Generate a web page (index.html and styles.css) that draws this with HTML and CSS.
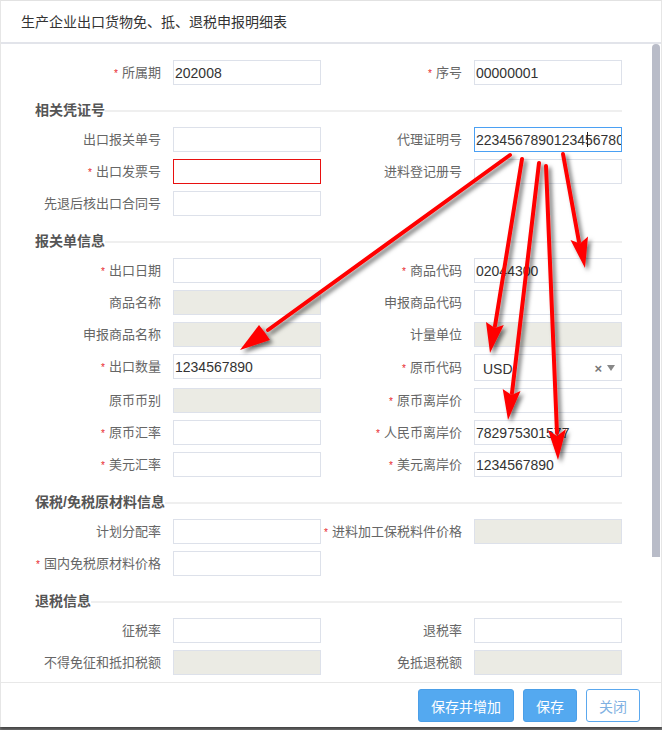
FILE: index.html
```html
<!DOCTYPE html>
<html lang="zh-CN">
<head>
<meta charset="utf-8">
<title>生产企业出口货物免、抵、退税申报明细表</title>
<link rel="stylesheet" href="styles.css">
</head>
<body>
<div class="dialog">
  <div class="header"><span class="title">生产企业出口货物免、抵、退税申报明细表</span></div>
  <div class="body">
    <div class="view">
      <div class="content">
        <div class="grid">
          <div class="item"><label class="lbl"><i class="req">*</i>所属期</label><input class="ipt" value="202008"></div>
          <div class="item"><label class="lbl"><i class="req">*</i>序号</label><input class="ipt" value="00000001"></div>
        </div>

        <div class="section"><span class="sec-title">相关凭证号</span><span class="sec-line"></span></div>
        <div class="grid">
          <div class="item"><label class="lbl">出口报关单号</label><input class="ipt"></div>
          <div class="item"><label class="lbl">代理证明号</label><span class="focus-wrap"><input class="ipt focus" value="22345678901234567801"><span class="caret"></span></span></div>
          <div class="item"><label class="lbl"><i class="req">*</i>出口发票号</label><input class="ipt error"></div>
          <div class="item"><label class="lbl">进料登记册号</label><input class="ipt"></div>
          <div class="item"><label class="lbl">先退后核出口合同号</label><input class="ipt"></div>
          <div class="item"></div>
        </div>

        <div class="section"><span class="sec-title">报关单信息</span><span class="sec-line"></span></div>
        <div class="grid">
          <div class="item"><label class="lbl"><i class="req">*</i>出口日期</label><input class="ipt"></div>
          <div class="item"><label class="lbl"><i class="req">*</i>商品代码</label><input class="ipt" value="02044300"></div>
          <div class="item"><label class="lbl">商品名称</label><input class="ipt" disabled></div>
          <div class="item"><label class="lbl">申报商品代码</label><input class="ipt"></div>
          <div class="item"><label class="lbl">申报商品名称</label><input class="ipt" disabled></div>
          <div class="item"><label class="lbl">计量单位</label><input class="ipt" disabled></div>
          <div class="item"><label class="lbl"><i class="req">*</i>出口数量</label><input class="ipt" value="1234567890"></div>
          <div class="item"><label class="lbl"><i class="req">*</i>原币代码</label>
            <div class="select"><span class="sel-val">USD</span><span class="sel-clear">×</span><span class="sel-arrow"></span></div>
          </div>
          <div class="item"><label class="lbl">原币币别</label><input class="ipt" disabled></div>
          <div class="item"><label class="lbl"><i class="req">*</i>原币离岸价</label><input class="ipt"></div>
          <div class="item"><label class="lbl"><i class="req">*</i>原币汇率</label><input class="ipt"></div>
          <div class="item"><label class="lbl"><i class="req">*</i>人民币离岸价</label><input class="ipt" value="782975301577"></div>
          <div class="item"><label class="lbl"><i class="req">*</i>美元汇率</label><input class="ipt"></div>
          <div class="item"><label class="lbl"><i class="req">*</i>美元离岸价</label><input class="ipt" value="1234567890"></div>
        </div>

        <div class="section"><span class="sec-title">保税/免税原材料信息</span><span class="sec-line"></span></div>
        <div class="grid">
          <div class="item"><label class="lbl">计划分配率</label><input class="ipt"></div>
          <div class="item"><label class="lbl"><i class="req">*</i>进料加工保税料件价格</label><input class="ipt" disabled></div>
          <div class="item"><label class="lbl"><i class="req">*</i>国内免税原材料价格</label><input class="ipt"></div>
          <div class="item"></div>
        </div>

        <div class="section"><span class="sec-title">退税信息</span><span class="sec-line"></span></div>
        <div class="grid">
          <div class="item"><label class="lbl">征税率</label><input class="ipt"></div>
          <div class="item"><label class="lbl">退税率</label><input class="ipt"></div>
          <div class="item"><label class="lbl">不得免征和抵扣税额</label><input class="ipt" disabled></div>
          <div class="item"><label class="lbl">免抵退税额</label><input class="ipt" disabled></div>
        </div>
      </div>
    </div>
    <div class="rail"><div class="thumb"></div></div>
  </div>
  <div class="footer">
    <button class="btn primary wide">保存并增加</button>
    <button class="btn primary">保存</button>
    <button class="btn plain">关闭</button>
  </div>
</div>

<svg class="annot" width="662" height="730" viewBox="0 0 662 730">
  <defs>
    <filter id="sh" x="-20%" y="-20%" width="140%" height="140%">
      <feDropShadow dx="3" dy="3" stdDeviation="2.2" flood-color="#000" flood-opacity="0.55"/>
    </filter>
  </defs>
  <g filter="url(#sh)" fill="#ff0000" stroke="#ff0000">
    <line x1="510" y1="155" x2="268" y2="330" stroke-width="4" stroke-linecap="round"/>
    <polygon points="240,350 259,325 264.5,332 270,340" stroke="none"/>

    <line x1="522" y1="159" x2="495" y2="326" stroke-width="4" stroke-linecap="round"/>
    <polygon points="490,353 486,322 494.9,328 503.8,325" stroke="none"/>

    <line x1="539" y1="163" x2="512" y2="393" stroke-width="4" stroke-linecap="round"/>
    <polygon points="508,420 502.7,389 511.6,395 520.5,391" stroke="none"/>

    <line x1="546" y1="166" x2="557" y2="433" stroke-width="4" stroke-linecap="round"/>
    <polygon points="558,460 548,430 557,436 566,429" stroke="none"/>

    <line x1="563" y1="154" x2="579" y2="242" stroke-width="4" stroke-linecap="round"/>
    <polygon points="585,268 570.5,240 580,243.5 588,236.5" stroke="none"/>
  </g>
</svg>
</body>
</html>
```

FILE: styles.css
```css
html, body {
  margin: 0;
  padding: 0;
}
body {
  width: 662px;
  height: 730px;
  background: #7b7b7b;
  position: relative;
  overflow: hidden;
  font-family: "Liberation Sans", "Noto Sans CJK SC", sans-serif;
}
.dialog {
  width: 662px;
  height: 727px;
  box-sizing: border-box;
  background: #fff;
  border-top: 1px solid #e2e2e2;
  border-left: 1px solid #e6e6e6;
  border-right: 1px solid #e6e6e6;
  display: flex;
  flex-direction: column;
  box-shadow: 0 2px 3px rgba(0,0,0,0.5);
}
.header {
  height: 41px;
  flex: none;
  border-bottom: 2px solid #e2e4ea;
  display: flex;
  align-items: center;
  padding-left: 20px;
}
.title {
  font-size: 14px;
  color: #333;
  line-height: 16px;
}
.body {
  height: 638px;
  flex: none;
  display: flex;
}
.view {
  flex: 1;
  overflow: hidden;
}
.rail {
  width: 9px;
  flex: none;
  background: #fff;
}
.thumb {
  width: 8px;
  height: 513px;
  background: #b9bcc8;
  border-radius: 4px 4px 0 0;
}
.content {
  padding: 16px 30px 0 34px;
}
.grid {
  display: grid;
  grid-template-columns: 280px 280px;
  column-gap: 21px;
  row-gap: 7px;
  padding-left: 6px;
  margin-bottom: 7px;
}
.item {
  display: flex;
  align-items: center;
  height: 25px;
}
.item:has(.select) {
  height: 27px;
}
.lbl {
  width: 120px;
  flex: none;
  margin-right: 12px;
  display: flex;
  justify-content: flex-end;
  align-items: center;
  white-space: nowrap;
  font-size: 13px;
  line-height: 16px;
  color: #666;
}
.req {
  font-style: normal;
  color: #e8262b;
  font-size: 10px;
  margin-right: 4px;
  line-height: 10px;
  position: relative;
  top: 1px;
}
.ipt {
  width: 148px;
  height: 25px;
  box-sizing: border-box;
  border: 1px solid #dde1ea;
  background: #fff;
  padding: 0 0 0 1px;
  margin: 0;
  font-family: "Liberation Sans", sans-serif;
  font-size: 14px;
  color: #333;
  outline: none;
  border-radius: 0;
}
.ipt:disabled {
  background: #ebebe4;
  border-color: #dde1ea;
}
.ipt.error {
  border-color: #e81010;
}
.ipt.focus {
  border-color: #4ba0f3;
}
.focus-wrap {
  position: relative;
  display: block;
  width: 148px;
  height: 25px;
}
.caret {
  position: absolute;
  left: 113px;
  top: 5px;
  width: 1px;
  height: 15px;
  background: #222;
}
.select {
  width: 148px;
  height: 27px;
  box-sizing: border-box;
  border: 1px solid #dde1ea;
  display: flex;
  align-items: center;
  padding: 0 6px 0 8px;
  font-size: 14px;
  color: #333;
}
.sel-val {
  flex: 1;
  padding-top: 2px;
}
.sel-clear {
  font-size: 13px;
  font-weight: bold;
  color: #777;
  margin-right: 5px;
  padding-top: 2px;
}
.sel-arrow {
  width: 0;
  height: 0;
  border-left: 4px solid transparent;
  border-right: 4px solid transparent;
  border-top: 6px solid #888;
}
.section {
  display: flex;
  align-items: center;
  height: 16px;
  padding-top: 10px;
  margin-bottom: 9px;
}
.sec-title {
  font-size: 14px;
  font-weight: bold;
  color: #555;
  line-height: 16px;
  white-space: nowrap;
}
.sec-line {
  flex: 1;
  height: 2px;
  background: #efefef;
  margin-top: 2px;
}
.footer {
  flex: none;
  border-top: 1px solid #e8e8e8;
  padding: 6px 21px 5px 0;
  display: flex;
  justify-content: flex-end;
  gap: 9px;
}
.btn {
  height: 33px;
  width: 54px;
  box-sizing: border-box;
  border-radius: 3px;
  font-family: "Noto Sans CJK SC", sans-serif;
  font-size: 14px;
  padding: 0;
  margin: 0;
  cursor: pointer;
}
.btn.wide {
  width: 96px;
}
.btn.primary {
  background: #54a9f0;
  border: 1px solid #4b9fe8;
  color: #fff;
}
.btn.plain {
  background: #fff;
  border: 1px solid #5ba8ee;
  color: #7fb1e2;
}
.annot {
  position: absolute;
  left: 0;
  top: 0;
  pointer-events: none;
}
```
